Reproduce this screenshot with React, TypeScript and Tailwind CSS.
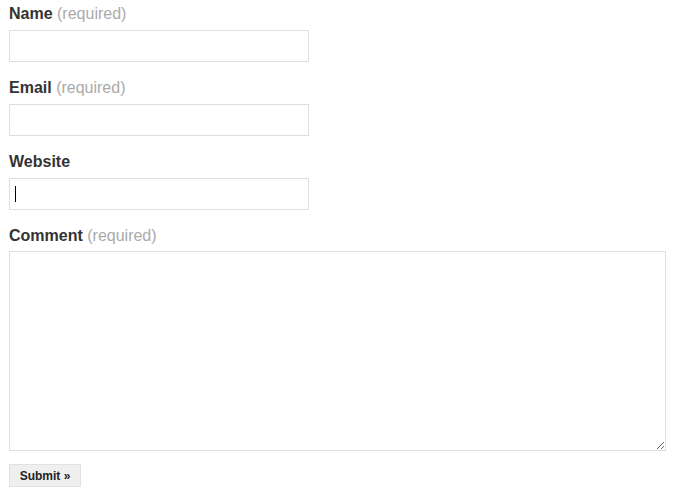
import React from 'react';

const Label = ({ text, required, tight }: { text: string; required?: boolean; tight?: boolean }) => (
  <label
    className={`block text-[16px] leading-[22px] font-bold text-[#333] ${tight ? 'mb-[4px]' : 'mb-[5px]'}`}
  >
    {text}
    {required && <span className="font-normal text-[#aaa]"> (required)</span>}
  </label>
);

const TextInput = ({ caret }: { caret?: boolean }) => (
  <div className="relative w-[300px]">
    <input
      type="text"
      className="block w-[300px] h-[32px] border border-[#dedede] bg-white px-[5px] text-[14px] outline-none"
    />
    {caret && <span className="absolute left-[6px] top-[8px] w-px h-[16px] bg-black" />}
  </div>
);

export default function App() {
  return (
    <div
      className="w-[696px] h-[493px] bg-white pl-[9px] pt-[3px]"
      style={{ fontFamily: '"Liberation Sans", Arial, sans-serif' }}
    >
      <div className="mb-[15px]">
        <Label text="Name" required />
        <TextInput />
      </div>
      <div className="mb-[15px]">
        <Label text="Email" required />
        <TextInput />
      </div>
      <div className="mb-[15px]">
        <Label text="Website" />
        <TextInput caret />
      </div>
      <div className="mb-[13px]">
        <Label text="Comment" required tight />
        <textarea className="block w-[657px] h-[200px] border border-[#dedede] bg-white outline-none resize" />
      </div>
      <button className="block w-[72px] h-[23px] border border-[#e2e2e2] bg-[#efefef] text-[12px] font-bold text-[#222] leading-none">
        Submit »
      </button>
    </div>
  );
}
